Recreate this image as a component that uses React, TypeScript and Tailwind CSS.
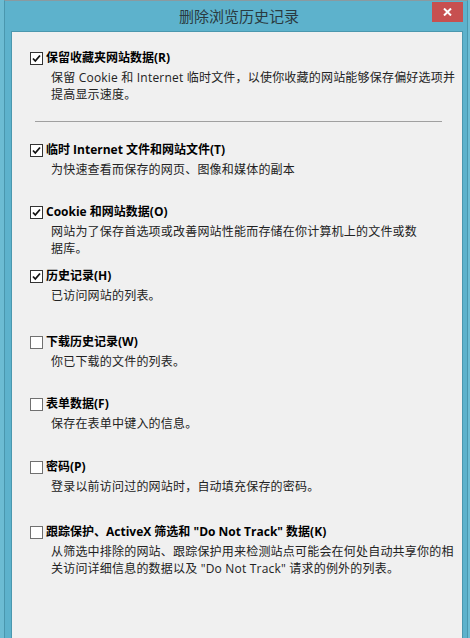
const items = [
  {
    label: "保留收藏夹网站数据(R)",
    lines: ["保留 Cookie 和 Internet 临时文件，以使你收藏的网站能够保存偏好选项并", "提高显示速度。"],
    checked: true,
    mt: "mt-[18px]",
  },
  {
    label: "临时 Internet 文件和网站文件(T)",
    lines: ["为快速查看而保存的网页、图像和媒体的副本"],
    checked: true,
    mt: "mt-[20px]",
  },
  {
    label: "Cookie 和网站数据(O)",
    lines: ["网站为了保存首选项或改善网站性能而存储在你计算机上的文件或数", "据库。"],
    checked: true,
    mt: "mt-[26px]",
  },
  {
    label: "历史记录(H)",
    lines: ["已访问网站的列表。"],
    checked: true,
    mt: "mt-[11px]",
  },
  {
    label: "下载历史记录(W)",
    lines: ["你已下载的文件的列表。"],
    checked: false,
    mt: "mt-[30px]",
  },
  {
    label: "表单数据(F)",
    lines: ["保存在表单中键入的信息。"],
    checked: false,
    mt: "mt-[26px]",
  },
  {
    label: "密码(P)",
    lines: ["登录以前访问过的网站时，自动填充保存的密码。"],
    checked: false,
    mt: "mt-[27px]",
  },
  {
    label: "跟踪保护、ActiveX 筛选和 \"Do Not Track\" 数据(K)",
    lines: ["从筛选中排除的网站、跟踪保护用来检测站点可能会在何处自动共享你的相", "关访问详细信息的数据以及 \"Do Not Track\" 请求的例外的列表。"],
    checked: false,
    mt: "mt-[29px]",
  },
];

function CheckBox({ checked }: { checked: boolean }) {
  return (
    <span
      className={
        "w-[13px] h-[13px] bg-white border flex items-center justify-center shrink-0 " +
        (checked ? "border-[#333333]" : "border-[#707070]")
      }
    >
      {checked && (
        <svg width="11" height="11" viewBox="0 0 11 11">
          <path d="M2 5.5 L4.3 8 L9 2.5" fill="none" stroke="#111" strokeWidth="1.8" />
        </svg>
      )}
    </span>
  );
}

function Option({ item }: { item: (typeof items)[number] }) {
  return (
    <div className={"flex flex-col " + item.mt}>
      <div className="flex items-center h-[16px] pl-[18px] gap-[3px]">
        <CheckBox checked={item.checked} />
        <span className="font-bold text-[12px] text-black whitespace-nowrap">{item.label}</span>
      </div>
      <div className="mt-[3px] pl-[39px] text-[12px] leading-[17px] text-[#222222] tracking-[0.2px]">
        {item.lines.map((line, i) => (
          <div key={i} className="whitespace-nowrap">{line}</div>
        ))}
      </div>
    </div>
  );
}

export default function App() {
  return (
    <div
      className="w-[470px] h-[638px] bg-[#6cbcd3] pl-[4px] pr-[2px] overflow-hidden"
      style={{ fontFamily: '"Open Sans", "Noto Sans CJK SC", sans-serif' }}
    >
      <div className="h-full bg-[#5db2cc] border-x border-[#4a97ae] pl-[6px] pr-[4px] flex flex-col border-t border-t-[#8a9aa0]">
        <div className="relative h-[30px] flex items-center justify-center shrink-0">
          <span className="text-[15px] text-[#2a3a40] pl-[4px] pt-[1px]">删除浏览历史记录</span>
          <div className="absolute right-[0px] top-[1px] w-[31px] h-[20px] bg-[#c75050] flex items-center justify-center">
            <svg width="9" height="8" viewBox="0 0 9 8">
              <path d="M1 0.5 L8 7.5 M8 0.5 L1 7.5" stroke="#fff" strokeWidth="2" />
            </svg>
          </div>
        </div>
        <div className="flex-1 bg-[#f0f0f0] border border-b-0 border-[#4a97ae] flex flex-col">
          <Option item={items[0]} />
          <div className="mt-[18px] ml-[23px] w-[407px] h-px bg-[#a0a0a0]" />
          {items.slice(1).map((item) => (
            <Option key={item.label} item={item} />
          ))}
        </div>
      </div>
    </div>
  );
}
